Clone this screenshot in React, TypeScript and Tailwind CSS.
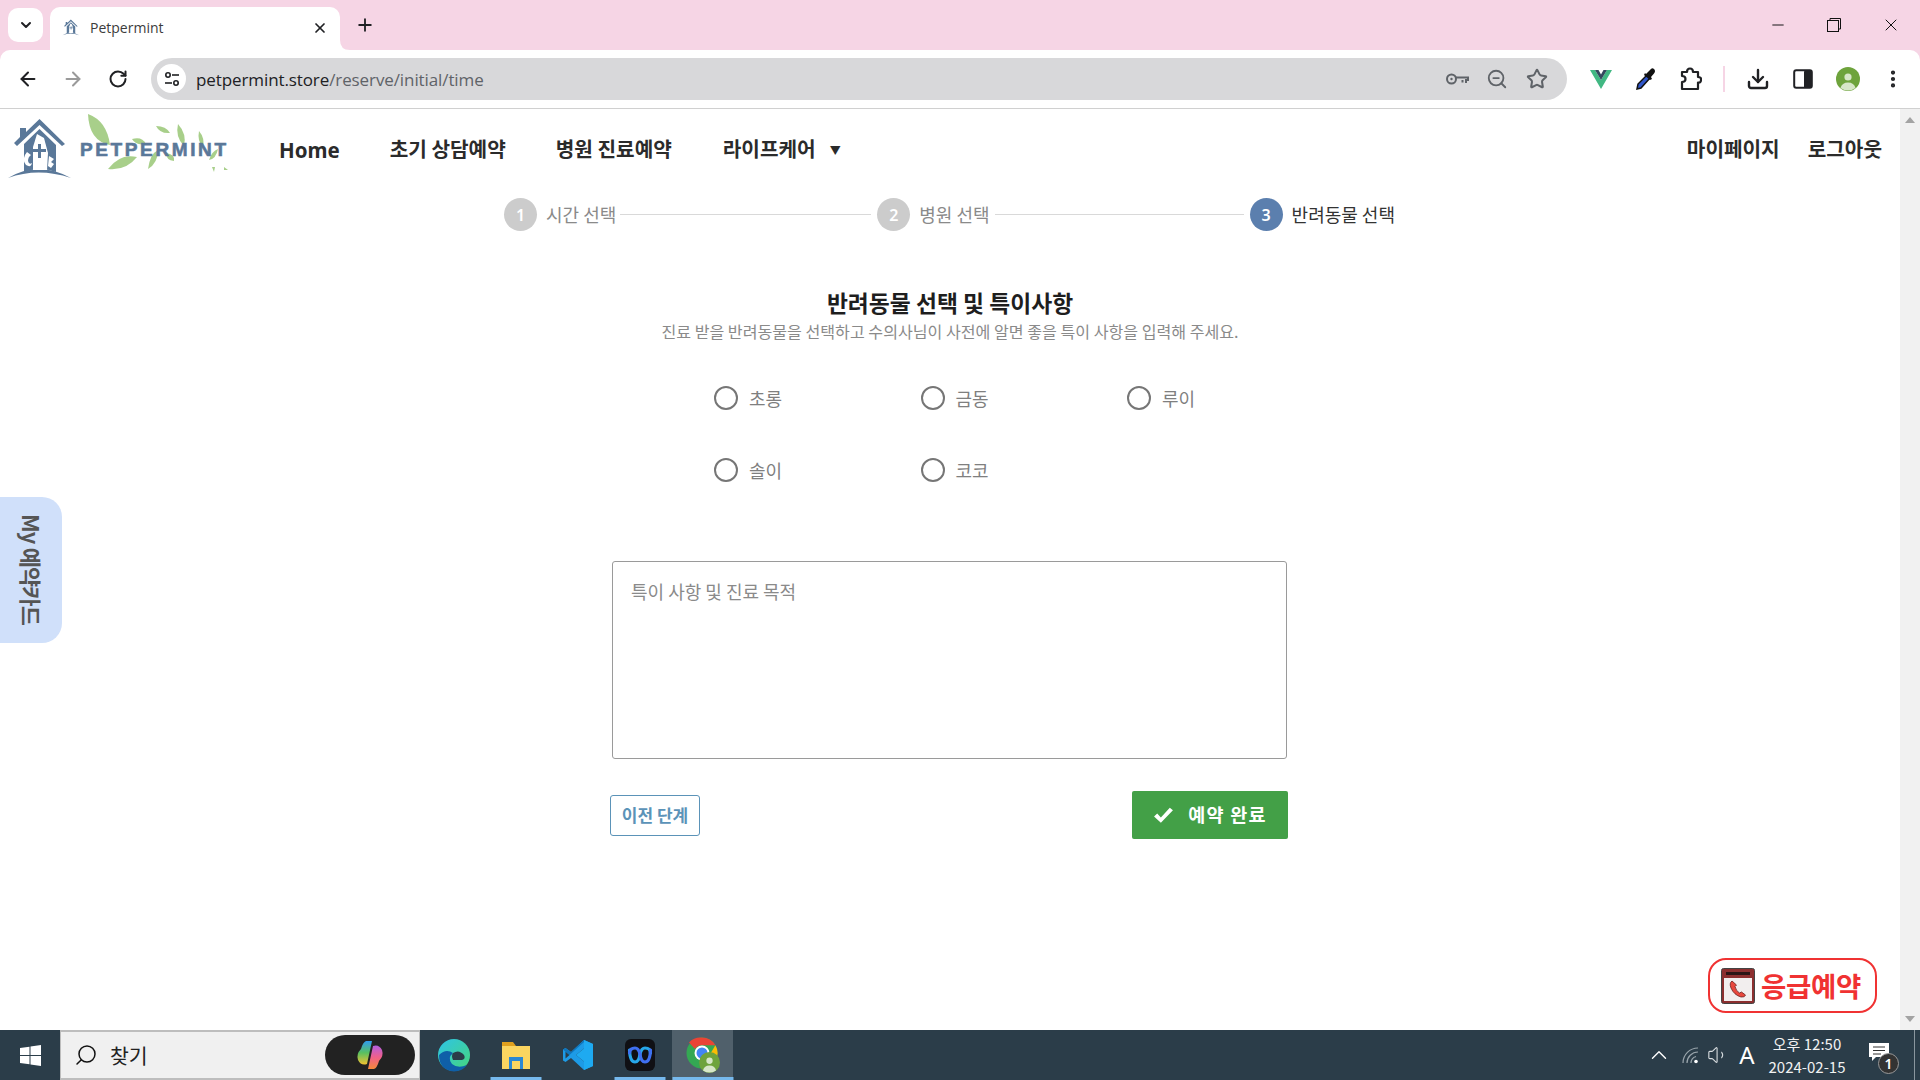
import { ArrowLeft, ArrowRight, RotateCw, Star, ZoomOut, Download, ChevronDown, ChevronUp, Plus, X, Minus, Search, Volume1, MoreVertical } from "lucide-react";

const kr = "font-['Noto_Sans_CJK_KR','Noto_Sans',sans-serif]";

function HouseMark({ size }: { size: number }) {
  return (
    <svg width={size} height={size * 1.0} viewBox="6 8 68 62">
      <g fill="#5a7899">
        <path d="M39.5 9 L65 34 L62 36 L39.5 15 L17 36 L14 33 L20 27 L20 18 L26 18 L26 22 Z" />
        <path d="M24 34 L39.5 19 L56 35 L56 61 Q40 55 24 61 Z" />
        <path d="M8 68 Q38 50 71 68 Q38 56 8 68 Z" />
      </g>
      <path d="M33 36 L38 24 L44 28 L48 44 L47 60 L33 60 Z" fill="#fff" />
      <path d="M39 34 h2.5 v5 h5 v2.5 h-5 v5 h-2.5 v-5 h-5 v-2.5 h5 Z" fill="#5a7899" />
    </svg>
  );
}

function Leaf({ d }: { d: string }) {
  return <path d={d} fill="#a8cf8a" />;
}

function Logo() {
  return (
    <svg width="240" height="81" viewBox="0 0 240 81" className="shrink-0">
      <g>
        <path d="M39.5 10 L65 35 L62 37 L39.5 16 L17 37 L14 34 L20 28 L20 19 L26 19 L26 23 Z" fill="#5a7899" />
        <path d="M24 35 L39.5 20 L56 36 L56 63 Q40 57 24 63 Z" fill="#5a7899" />
        <path d="M8 69 Q38 51 71 69 Q38 58 8 69 Z" fill="#5a7899" />
        <path d="M33 38 L37 25 L44 29 L48 44 L47 61 L33 61 Z" fill="#fff" />
        <path d="M38 35 h3 v5 h5 v3 h-5 v6 h-3 v-6 h-5 v-3 h5 Z" fill="#5a7899" />
        <path d="M27 43 q-6 7 -1 13 q5 3 6 -2 q-3 2 -4 -2 q0 -4 3 -6 Z" fill="#fff" />
        <path d="M49 47 l5 3 l-3 3 l3 2 l-3 4 l-3 -2 Z" fill="#fff" />
      </g>
      <Leaf d="M88 5 Q107 12 110 36 Q89 32 88 5 Z" />
      <Leaf d="M108 60 Q120 44 137 48 Q126 62 108 60 Z" />
      <Leaf d="M132 30 Q142 27 146 35 Q136 37 132 30 Z" />
      <Leaf d="M156 17 Q166 17 170 24 Q160 25 156 17 Z" />
      <Leaf d="M178 15 Q187 25 184 37 Q175 28 178 15 Z" />
      <Leaf d="M199 22 Q205 29 203 38 Q197 32 199 22 Z" />
      <Leaf d="M148 60 Q150 45 158 41 Q158 54 148 60 Z" />
      <Leaf d="M166 44 Q175 45 174 52 Q166 51 166 44 Z" />
      <Leaf d="M209 51 Q212 42 218 40 Q216 50 209 51 Z" />
      <Leaf d="M212 58 l3 0 l-1 5 Z" />
      <Leaf d="M224 58 l4 3 l-4 0 Z" />
      <text x="80" y="47" textLength="146" lengthAdjust="spacing" fill="#5a7899" stroke="#5a7899" strokeWidth="0.6" fontSize="19" fontWeight="700" fontFamily="'Liberation Sans', sans-serif">PETPERMINT</text>
    </svg>
  );
}

function KeyIcon() {
  return (
    <svg width="24" height="24" viewBox="0 0 24 24" fill="none" stroke="#5f6368" strokeWidth="2">
      <circle cx="6.5" cy="12" r="4.5" />
      <circle cx="6.5" cy="12" r="1.2" fill="#5f6368" stroke="none" />
      <path d="M11 10.5 H23 V13 H21 V16 M17.5 13 V15.5" />
    </svg>
  );
}

function VueIcon() {
  return (
    <svg width="22" height="20" viewBox="0 0 22 20">
      <path d="M0 1 H5 L11 11 L17 1 H22 L11 20 Z" fill="#41b883" />
      <path d="M5 1 H8.5 L11 5.5 L13.5 1 H17 L11 11 Z" fill="#34495e" />
    </svg>
  );
}

function Dropper() {
  return (
    <svg width="22" height="24" viewBox="0 0 22 24">
      <path d="M2 22 L3 17 L12 8 L15 11 L6 21 Z" fill="#2f55c9" stroke="#111" strokeWidth="1.5" />
      <path d="M11 7 L15 3 Q17 0 19 2 Q21 4 19 6.500 L16 10 L17 12 L15 13 L9 8 L10 6 Z" fill="#111" />
    </svg>
  );
}

function PuzzleIcon() {
  return (
    <svg width="22" height="24" viewBox="0 0 22 24" fill="none" stroke="#202124" strokeWidth="2.2" strokeLinejoin="round">
      <path d="M2 5 H7 Q7 1.500 10 1.500 Q13 1.500 13 5 H18 V10 Q21.500 10 21 13 Q21 16 18 15.500 V22 H2 V15 Q5.500 15 5.500 12 Q5.500 9 2 9 Z" />
    </svg>
  );
}

function PanelIcon() {
  return (
    <svg width="20" height="20" viewBox="0 0 20 20">
      <rect x="1.2" y="1.2" width="17.600" height="17.600" rx="2" fill="#fff" stroke="#202124" strokeWidth="2" />
      <rect x="11" y="1.200" width="8" height="17.600" rx="1.500" fill="#202124" />
    </svg>
  );
}

function Avatar({ size = 24 }: { size?: number }) {
  return (
    <svg width={size} height={size} viewBox="0 0 24 24">
      <circle cx="12" cy="12" r="12" fill="#6ea33c" />
      <circle cx="12" cy="10" r="3.600" fill="#d7e6c8" />
      <path d="M4.500 21 Q6 15.500 12 15.500 Q18 15.500 19.500 21 Q12 26 4.500 21 Z" fill="#d7e6c8" />
    </svg>
  );
}

function Tune() {
  return (
    <svg width="16" height="16" viewBox="0 0 16 16" fill="none" stroke="#202124" strokeWidth="1.600">
      <circle cx="4" cy="4" r="2.200" />
      <path d="M8 4 H15" />
      <circle cx="12" cy="12" r="2.200" />
      <path d="M1 12 H8" />
    </svg>
  );
}

function Slot({ w = "w-[45px]", children }: { w?: string; children: React.ReactNode }) {
  return <div className={`${w} h-full flex items-center justify-center shrink-0`}>{children}</div>;
}

function TabBar() {
  return (
    <div className="h-[50px] bg-[#f6d5e5] flex items-end shrink-0 relative">
      <div className="w-[35px] h-[34px] bg-white rounded-[10px] ml-[8px] mb-[8px] flex items-center justify-center shrink-0">
        <ChevronDown size={16} strokeWidth={3} color="#202124" />
      </div>
      <div className="w-[290px] h-[43px] bg-white rounded-t-[10px] ml-[7px] flex items-center pl-[12px] pr-[12px] relative shrink-0">
        <div className="w-[18px] h-[18px] flex items-center justify-center -mt-[2px]"><HouseMark size={21} /></div>
        <span className="ml-[10px] -mt-[2px] text-[14px] text-[#3c3c3c] font-['Open_Sans',sans-serif] flex-1">Petpermint</span>
        <X size={16} strokeWidth={2.6} color="#202124" className="-mt-[2px]" />
        <svg width="10" height="10" viewBox="0 0 10 10" className="absolute -right-[10px] bottom-0"><path d="M0 0 Q0 10 10 10 L0 10 Z" fill="#fff" /></svg>
      </div>
      <div className="ml-[13px] mb-[13px] w-[24px] h-[24px] flex items-center justify-center shrink-0">
        <Plus size={20} strokeWidth={2.2} color="#202124" />
      </div>
      <div className="ml-auto flex h-full items-center">
        <Slot w="w-[56px]"><Minus size={18} strokeWidth={1.3} color="#111" /></Slot>
        <Slot w="w-[56px]">
          <svg width="14" height="14" viewBox="0 0 14 14" fill="none" stroke="#111" strokeWidth="1"><rect x="0.500" y="2.500" width="11" height="11" /><path d="M3 2.500 V0.500 H13.500 V11 H11.500" /></svg>
        </Slot>
        <Slot w="w-[58px]"><X size={20} strokeWidth={1.2} color="#111" /></Slot>
      </div>
    </div>
  );
}

function Toolbar() {
  return (
    <div className="h-[59px] bg-[#f6d5e5] shrink-0">
      <div className="h-full bg-white rounded-t-[10px] border-b border-b-[#d0d0d0] flex items-center pl-[5px] pb-[1px]">
        <Slot><ArrowLeft size={22} strokeWidth={2.2} color="#202124" /></Slot>
        <Slot><ArrowRight size={22} strokeWidth={2.2} color="#9a9a9a" /></Slot>
        <Slot><RotateCw size={20} strokeWidth={2.4} color="#202124" /></Slot>
        <div className="ml-[11px] w-[1416px] h-[42px] bg-[#d8d8da] rounded-full flex items-center pl-[6px] pr-[10px] shrink-0">
          <div className="w-[29px] h-[29px] bg-white rounded-full flex items-center justify-center shrink-0"><Tune /></div>
          <div className="ml-[10px] pt-[2px] text-[17px] font-['Open_Sans',sans-serif] text-[#202124] flex-1 tracking-[-0.1px]">
            petpermint.store<span className="text-[#5f6368]">/reserve/initial/time</span>
          </div>
          <Slot w="w-[40px]"><KeyIcon /></Slot>
          <Slot w="w-[40px]"><ZoomOut size={22} strokeWidth={2} color="#5f6368" /></Slot>
          <Slot w="w-[40px]"><Star size={22} strokeWidth={2.2} color="#5f6368" /></Slot>
        </div>
        <div className="ml-[11px] flex h-full items-center">
          <Slot><VueIcon /></Slot>
          <Slot><Dropper /></Slot>
          <Slot><PuzzleIcon /></Slot>
          <div className="w-[22px] h-full flex items-center justify-center shrink-0"><div className="w-[2px] h-[26px] bg-[#f6d5e5]" /></div>
          <Slot><Download size={24} strokeWidth={2.4} color="#202124" /></Slot>
          <Slot><PanelIcon /></Slot>
          <Slot><Avatar /></Slot>
          <Slot><MoreVertical size={22} strokeWidth={2.6} color="#202124" /></Slot>
        </div>
      </div>
    </div>
  );
}

function Nav() {
  const cls = "text-[20.200px] font-semibold text-[#2b2b2b]";
  return (
    <div className={`h-[81px] flex items-center shrink-0 ${kr}`}>
      <Logo />
      <a className="text-[20.500px] font-bold text-[#2b2b2b] ml-[39px] mt-[1px] font-['Noto_Sans','Noto_Sans_CJK_KR',sans-serif]">Home</a>
      <a className={`${cls} ml-[50px]`}>초기 상담예약</a>
      <a className={`${cls} ml-[50px]`}>병원 진료예약</a>
      <a className={`${cls} ml-[51px]`}>라이프케어</a>
      <span className="ml-[14px] mt-[2px] text-[11px] text-[#2b2b2b]">▼</span>
      <a className={`${cls} ml-auto`}>마이페이지</a>
      <a className={`${cls} ml-[28px] mr-[18px]`}>로그아웃</a>
    </div>
  );
}

function Step({ n, label, active }: { n: number; label: string; active?: boolean }) {
  return (
    <div className="flex items-center shrink-0">
      <div className={`w-[33px] h-[33px] rounded-full flex items-center justify-center text-white text-[16px] font-semibold font-['Noto_Sans',sans-serif] ${active ? "bg-[#5b7fae]" : "bg-[#cccccc]"}`}>{n}</div>
      <span className={`ml-[9px] text-[18px] whitespace-nowrap ${active ? "text-[#333333]" : "text-[#8a8a8a]"}`}>{label}</span>
    </div>
  );
}

function Radio({ label }: { label: string }) {
  return (
    <label className="flex items-center">
      <span className="w-[24px] h-[24px] rounded-full border-2 border-[#767676] bg-white shrink-0" />
      <span className="ml-[11px] text-[18px] text-[#7f7f7f]">{label}</span>
    </label>
  );
}

function Check() {
  return (
    <svg width="21" height="19" viewBox="0 0 20 18"><path d="M1 10 L4 7 L7.500 11 L16 1.500 L19 4 L7.500 16 Z" fill="#fff" /></svg>
  );
}

function Page() {
  return (
    <div className={`flex-1 relative min-w-0 bg-white ${kr}`}>
      <Nav />
      <div className="flex items-center justify-center mt-[8px] pr-[1px]">
        <Step n={1} label="시간 선택" />
        <div className="w-[251px] h-[1px] bg-[#d9d9d9] ml-[4px] mr-[6px]" />
        <Step n={2} label="병원 선택" />
        <div className="w-[249px] h-[1px] bg-[#d9d9d9] ml-[5px] mr-[6px]" />
        <Step n={3} label="반려동물 선택" active />
      </div>

      <div className="mx-auto w-[680px] mt-[55px] flex flex-col items-center">
        <h2 className="text-[22.800px] font-semibold text-[#1e1e1e] leading-[33px]">반려동물 선택 및 특이사항</h2>
        <p className="text-[16.100px] text-[#8a8a8a] leading-[24px]">진료 받을 반려동물을 선택하고 수의사님이 사전에 알면 좋을 특이 사항을 입력해 주세요.</p>

        <div className="grid grid-cols-[206.500px_206.500px_206.500px] auto-rows-[72px] self-start ml-[104px] mt-[19px] items-center">
          <Radio label="초롱" />
          <Radio label="금동" />
          <Radio label="루이" />
          <Radio label="솔이" />
          <Radio label="코코" />
        </div>

        <div className="mt-[55px] w-[675px] h-[198px] border border-[#9a9a9a] rounded-[3px] px-[18px] py-[17px] text-[18px] leading-[24px] text-[#8a8a8a] self-start ml-[2px]">특이 사항 및 진료 목적</div>

        <div className="w-[680px] flex items-center justify-between mt-[32px]">
          <button className="w-[90px] h-[41px] border border-[#5b93b8] rounded-[3px] text-[#5b93b8] text-[17px] font-semibold">이전 단계</button>
          <button className="w-[156px] h-[48px] bg-[#43a047] rounded-[2px] text-white text-[18.500px] font-semibold flex items-center justify-center tracking-[1.200px] mr-[2px]">
            <Check /><span className="ml-[14px]">예약 완료</span>
          </button>
        </div>
      </div>

      <div className="absolute left-0 top-[388px] w-[62px] h-[146px] bg-[#d0e0fa] rounded-r-[20px] flex items-center justify-center">
        <span className="[writing-mode:vertical-rl] [text-orientation:sideways] text-[22px] font-semibold text-[#555555] whitespace-nowrap tracking-[-0.900px]">My 예약카드</span>
      </div>

      <div className="absolute left-[1708px] top-[849px] w-[169px] h-[55px] border-2 border-[#f03232] rounded-[18px] bg-white flex items-center pl-[11px]">
        <svg width="34" height="36" viewBox="0 0 34 36" className="shrink-0">
          <rect x="0.500" y="0.500" width="33" height="35" rx="2" fill="#8c2f2f" stroke="#444" />
          <rect x="3" y="10" width="28" height="23" fill="#f2eeee" />
          <rect x="5" y="4" width="24" height="3" fill="#2a1515" />
          <path d="M11 13 Q8 15 10 20 Q13 27 20 29 Q24 29.500 24.500 27 L20.500 24 L18.500 25 Q15 23 14 18.500 L15.500 17 Z" fill="#e8473d" stroke="#6b1f1f" strokeWidth="0.800" />
        </svg>
        <span className="ml-[6px] text-[27.500px] font-bold text-[#f03232] whitespace-nowrap tracking-[-0.300px]">응급예약</span>
      </div>
    </div>
  );
}

function Scrollbar() {
  return (
    <div className="w-[20px] bg-[#f1f1f1] shrink-0 flex flex-col items-center justify-between py-[8px]">
      <div className="w-0 h-0 border-x-[5px] border-x-transparent border-b-[6px] border-b-[#a3a3a3]" />
      <div className="w-0 h-0 border-x-[5px] border-x-transparent border-t-[6px] border-t-[#a3a3a3]" />
    </div>
  );
}

function Win() {
  return (
    <svg width="21" height="21" viewBox="0 0 21 21" fill="#fff">
      <path d="M0 3 L9.500 1.700 V10 H0 Z M10.500 1.500 L21 0 V10 H10.500 Z M0 11 H9.500 V19.300 L0 18 Z M10.500 11 H21 V21 L10.500 19.500 Z" />
    </svg>
  );
}

function Copilot() {
  return (
    <svg width="30" height="30" viewBox="0 0 30 30">
      <defs>
        <linearGradient id="cpA" x1="0" y1="0" x2="0" y2="1"><stop offset="0" stopColor="#2f9bf0" /><stop offset="0.500" stopColor="#58c060" /><stop offset="1" stopColor="#f2c230" /></linearGradient>
        <linearGradient id="cpB" x1="0" y1="0" x2="0" y2="1"><stop offset="0" stopColor="#b35ee0" /><stop offset="0.500" stopColor="#f0608a" /><stop offset="1" stopColor="#f58a3a" /></linearGradient>
      </defs>
      <path d="M11 1 H17 L12 24 Q6 26 3 20 Q1 14 6 9 Q8 2 11 1 Z" fill="url(#cpA)" />
      <path d="M19 29 H13 L18 6 Q24 4 27 10 Q29 16 24 21 Q22 28 19 29 Z" fill="url(#cpB)" />
    </svg>
  );
}

function Edge() {
  return (
    <svg width="32" height="34" viewBox="0 0 32 34">
      <defs>
        <linearGradient id="edA" x1="0" y1="0" x2="1" y2="1"><stop offset="0" stopColor="#2ec4e8" /><stop offset="1" stopColor="#46d67a" /></linearGradient>
      </defs>
      <circle cx="16" cy="17" r="16" fill="url(#edA)" />
      <path d="M1 17 Q1 32 16 33.500 Q24 33.500 29 27 Q20 31 14 26 Q9 20 15 15 Q8 10 1 17 Z" fill="#0f5fa8" />
      <path d="M15 15 Q21 11 26 17 Q28 21 24 22 L15 22 Q13 18 15 15 Z" fill="#2b3d49" />
    </svg>
  );
}

function Folder() {
  return (
    <svg width="30" height="30" viewBox="0 0 30 30">
      <path d="M1 2 H12 L15 6 H1 Z" fill="#e0a01e" />
      <rect x="1" y="6" width="28" height="23" fill="#fbd560" />
      <rect x="8" y="17" width="14" height="12" fill="#2b87d3" />
      <rect x="11" y="21" width="8" height="8" fill="#fbd560" />
    </svg>
  );
}

function Code() {
  return (
    <svg width="32" height="32" viewBox="0 0 32 32">
      <path d="M22 1 L31 5 V27 L22 31 L9 19 L3.500 23 L1 21.500 V10.500 L3.500 9 L9 13 Z M22 9.500 L14 16 L22 22.500 Z M3.500 12.500 V19.500 L7.500 16 Z" fill="#1d9be6" />
      <path d="M22 1 L31 5 V27 L22 31 Z M22 9.500 V22.500 L14 16 Z" fill="#1eaaf1" fillRule="evenodd" />
      <path d="M22 1 L9 13 L3.500 9 L1 10.500 L7.500 16 L22 3 Z" fill="#0f75bb" />
    </svg>
  );
}

function Webex() {
  return (
    <svg width="30" height="32" viewBox="0 0 30 32">
      <rect width="30" height="32" rx="6" fill="#101014" />
      <path d="M4.500 11 Q5 23 10 23 Q14 23 15 15 Q16.500 9 20 9 Q25.500 9 25.500 14" fill="none" stroke="#27a6e8" strokeWidth="3.200" strokeLinecap="round" />
      <path d="M4.500 14 Q5 9 10 9 Q13.500 9 15 15 Q16 23 20 23 Q25 23 25.500 11" fill="none" stroke="#3f6ff0" strokeWidth="3.200" strokeLinecap="round" />
    </svg>
  );
}

function Chrome() {
  return (
    <div className="relative w-[34px] h-[36px]">
      <svg width="32" height="32" viewBox="0 0 32 32">
        <circle cx="16" cy="16" r="15.500" fill="#34a853" />
        <path d="M16 .5 A15.500 15.500 0 0 1 29.400 8.200 L16 8.200 A8 8 0 0 0 9 12 L3 5.500 A15.500 15.500 0 0 1 16 .5 Z" fill="#ea4335" />
        <path d="M29.400 8.200 A15.500 15.500 0 0 1 16 31.500 L23 19 Z" fill="#fbbc04" />
        <circle cx="16" cy="16" r="7.500" fill="#fff" />
        <circle cx="16" cy="16" r="5.500" fill="#4285f4" />
      </svg>
      <div className="absolute right-0 bottom-0"><Avatar size={21} /></div>
    </div>
  );
}

function TaskIcon({ w = "w-[62px]", bar, active, children }: { w?: string; bar?: string; active?: boolean; children: React.ReactNode }) {
  return (
    <div className={`${w} h-full relative flex items-center justify-center shrink-0 ${active ? "bg-[#50606b]" : ""}`}>
      {children}
      {bar && <div className={`absolute bottom-0 left-1/2 -translate-x-1/2 h-[3px] bg-[#76b9ed] ${bar}`} />}
    </div>
  );
}

function Taskbar() {
  return (
    <div className={`h-[50px] bg-[#2b3d49] flex items-stretch shrink-0 ${kr}`}>
      <div className="w-[60px] flex items-center justify-center shrink-0"><Win /></div>
      <div className="w-[360px] bg-[#f0f0f0] border-y-2 border-x border-[#bdbdbd] border-r-[#bdbdbd] flex items-center pl-[13px] pr-[4px] shrink-0">
        <Search size={24} strokeWidth={1.500} color="#111" className="-scale-x-100" />
        <span className="ml-[12px] text-[20.500px] text-[#222222] flex-1">찾기</span>
        <div className="w-[90px] h-[40px] rounded-full bg-[#222222] flex items-center justify-center"><Copilot /></div>
      </div>
      <div className="ml-[3px] flex h-full">
        <TaskIcon><Edge /></TaskIcon>
        <TaskIcon bar="w-[51px]"><Folder /></TaskIcon>
        <TaskIcon><Code /></TaskIcon>
        <TaskIcon bar="w-[51px]"><Webex /></TaskIcon>
        <div className="w-[1px] shrink-0" />
        <TaskIcon w="w-[61px]" bar="w-full" active><Chrome /></TaskIcon>
      </div>
      <div className="ml-auto flex items-center h-full text-white">
        <ChevronUp size={26} strokeWidth={1.300} color="#fff" />
        <div className="ml-[6px] w-[26px] flex items-center justify-center">
          <svg width="20" height="18" viewBox="0 0 20 18" fill="none" stroke="#9aa5ac" strokeWidth="1.200">
            <path d="M2 17 A15 15 0 0 1 17 2" /><path d="M6 17 A11 11 0 0 1 17 6" /><path d="M10 17 A7 7 0 0 1 15 10.500" />
            <circle cx="15" cy="15.500" r="1.800" fill="#fff" stroke="none" />
          </svg>
        </div>
        <div className="ml-[2px] w-[24px] flex items-center justify-center"><Volume1 size={22} strokeWidth={1.200} color="#d8dde0" /></div>
        <span className="ml-[4px] w-[26px] text-center text-[24px] font-['Noto_Sans',sans-serif] leading-none">A</span>
        <div className="ml-[1px] w-[92px] flex flex-col items-center justify-center text-[15px] leading-[23px] text-[#f2f2f2] font-['Noto_Sans_CJK_KR',sans-serif]">
          <span>오후 12:50</span>
          <span>2024-02-15</span>
        </div>
        <div className="ml-[10px] mr-[17px] w-[34px] h-full relative flex items-center">
          <svg width="20" height="18" viewBox="0 0 20 18" className="ml-[6px] -mt-[6px]"><path d="M0 0 H20 V14 H7 L3 18 V14 H0 Z" fill="#fff" /><path d="M4 4 H16 M4 7.500 H16 M4 11 H12" stroke="#333" strokeWidth="1" /></svg>
          <div className="absolute left-[15px] top-[23px] w-[21px] h-[21px] rounded-full bg-[#333333] border border-[#999999] flex items-center justify-center text-[14px] font-['Noto_Sans',sans-serif] font-semibold">1</div>
        </div>
        <div className="w-[1px] h-full bg-[#8a969e]" />
        <div className="w-[5px]" />
      </div>
    </div>
  );
}

export default function App() {
  return (
    <div className="w-[1920px] h-[1080px] overflow-hidden flex flex-col bg-white">
      <TabBar />
      <Toolbar />
      <div className="flex-1 flex min-h-0">
        <Page />
        <Scrollbar />
      </div>
      <Taskbar />
    </div>
  );
}
